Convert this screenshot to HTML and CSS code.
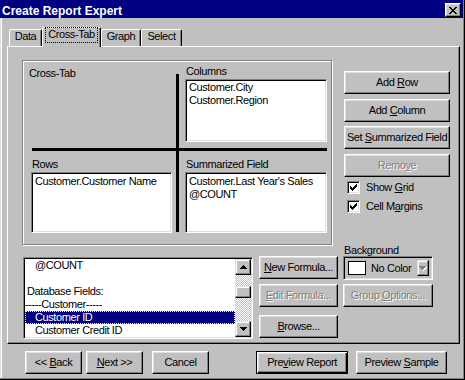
FILE: index.html
```html
<!DOCTYPE html>
<html lang="en">
<head>
<meta charset="utf-8">
<title>Create Report Expert</title>
<link rel="stylesheet" href="styles.css">
</head>
<body>
<div class="window">
  <div class="titlebar">
    <span class="title">Create Report Expert</span>
    <button class="close-btn" aria-label="Close">
      <svg width="8" height="7" viewBox="0 0 8 7" shape-rendering="crispEdges"><path fill="#000" d="M0 0h2v1H0z M6 0h2v1H6z M1 1h2v1H1z M5 1h2v1H5z M2 2h4v1H2z M3 3h2v1H3z M2 4h4v1H2z M1 5h2v1H1z M5 5h2v1H5z M0 6h2v1H0z M6 6h2v1H6z"/></svg>
    </button>
  </div>
  <div class="client">
    <div class="tabs">
      <div class="tab tab-data">Data</div>
      <div class="tab tab-active tab-xt"><span class="focus">Cross-Tab</span></div>
      <div class="tab tab-graph">Graph</div>
      <div class="tab tab-select">Select</div>
    </div>
    <div class="panel">
      <div class="top-row">
        <div class="groupbox">
          <div class="xt-grid">
            <div class="xt-label">Cross-Tab</div>
            <div class="cell">
              <div class="lbl">Columns</div>
              <div class="field field-cols">
                <div>Customer.City</div>
                <div>Customer.Region</div>
              </div>
            </div>
            <div class="cell cell-rows">
              <div class="lbl">Rows</div>
              <div class="field field-rows">
                <div>Customer.Customer Name</div>
              </div>
            </div>
            <div class="cell">
              <div class="lbl">Summarized Field</div>
              <div class="field field-sum">
                <div>Customer.Last Year's Sales</div>
                <div>@COUNT</div>
              </div>
            </div>
          </div>
          <div class="vline"></div>
          <div class="hline"></div>
        </div>
        <div class="side">
          <button class="btn side-btn">Add <u>R</u>ow</button>
          <button class="btn side-btn sb2">Add <u>C</u>olumn</button>
          <button class="btn side-btn sb3">Set <u>S</u>ummarized Field</button>
          <button class="btn side-btn sb4" disabled>Remo<u>v</u>e</button>
          <div class="check ck1"><span class="box"><svg width="7" height="7" viewBox="0 0 7 7" shape-rendering="crispEdges"><path fill="#000" d="M0 2h1v3H0z M1 3h1v3H1z M2 4h1v3H2z M3 3h1v3H3z M4 2h1v3H4z M5 1h1v3H5z M6 0h1v3H6z"/></svg></span><span class="ck-text">Show <u>G</u>rid</span></div>
          <div class="check ck2"><span class="box"><svg width="7" height="7" viewBox="0 0 7 7" shape-rendering="crispEdges"><path fill="#000" d="M0 2h1v3H0z M1 3h1v3H1z M2 4h1v3H2z M3 3h1v3H3z M4 2h1v3H4z M5 1h1v3H5z M6 0h1v3H6z"/></svg></span><span class="ck-text">Cell M<u>a</u>rgins</span></div>
        </div>
      </div>
      <div class="bottom-row">
        <div class="dblist">
          <div class="items">
            <div class="item ind">@COUNT</div>
            <div class="item">&nbsp;</div>
            <div class="item ind-s">Database Fields:</div>
            <div class="item">-----Customer-----</div>
            <div class="item ind sel">Customer ID</div>
            <div class="item ind">Customer Credit ID</div>
          </div>
          <div class="scrollbar">
            <div class="sb-btn"><svg width="7" height="4" viewBox="0 0 7 4" shape-rendering="crispEdges"><path fill="#000" d="M3 0h1v1H3z M2 1h3v1H2z M1 2h5v1H1z M0 3h7v1H0z"/></svg></div>
            <div class="sb-thumb"></div>
            <div class="sb-btn sb-down"><svg width="7" height="4" viewBox="0 0 7 4" shape-rendering="crispEdges"><path fill="#000" d="M0 0h7v1H0z M1 1h5v1H1z M2 2h3v1H2z M3 3h1v1H3z"/></svg></div>
          </div>
        </div>
        <div class="mid">
          <button class="btn mid-btn"><u>N</u>ew Formula...</button>
          <button class="btn mid-btn mb2" disabled><u>E</u>dit Formula...</button>
          <button class="btn mid-btn mb3"><u>B</u>rowse...</button>
        </div>
        <div class="bg">
          <div class="bg-label">Background</div>
          <div class="combo">
            <span class="swatch"></span>
            <span class="combo-text">No Color</span>
            <span class="combo-btn"><svg width="8" height="5" viewBox="0 0 8 5" shape-rendering="crispEdges"><path fill="#fff" d="M1 1h7v1H1z M2 2h5v1H2z M3 3h3v1H3z M4 4h1v1H4z"/><path fill="#808080" d="M0 0h7v1H0z M1 1h5v1H1z M2 2h3v1H2z M3 3h1v1H3z"/></svg></span>
          </div>
          <button class="btn grp-btn" disabled>Group <u>O</u>ptions...</button>
        </div>
      </div>
    </div>
    <div class="footer">
      <button class="btn f-btn">&lt;&lt; <u>B</u>ack</button>
      <button class="btn f-btn f-next"><u>N</u>ext &gt;&gt;</button>
      <button class="btn f-btn f-cancel">Cancel</button>
      <button class="btn btn-default f-prev">Pre<u>v</u>iew Report</button>
      <button class="btn f-sample">Preview <u>S</u>ample</button>
    </div>
  </div>
</div>
</body>
</html>
```
FILE: styles.css
```css
html, body {
  margin: 0;
  padding: 0;
}
body {
  background: #c0c0c0;
  font-family: "Liberation Sans", Arial, sans-serif;
  font-size: 11px;
  line-height: 13px;
  letter-spacing: -0.4px;
  color: #000;
  overflow: hidden;
}
button {
  font: inherit;
  letter-spacing: inherit;
  color: inherit;
  margin: 0;
  padding: 0;
}
u { text-underline-offset: 1px; }

.window {
  width: 465px;
  height: 380px;
  box-sizing: border-box;
  border-right: 1px solid #000;
  border-bottom: 1px solid #000;
  padding: 0 1px 1px 0;
  background: #c0c0c0;
  box-shadow: inset -1px -1px #808080, inset 1px 0 #dfdfdf, inset 2px 0 #fff;
}

/* title bar */
.titlebar {
  height: 18px;
  background: #000080;
  display: flex;
  align-items: flex-start;
}
.title {
  color: #fff;
  font-weight: bold;
  font-size: 12px;
  letter-spacing: 0;
  line-height: 14px;
  margin: 4px 0 0 2px;
}
.close-btn {
  width: 16px;
  height: 14px;
  margin: 3px 2px 0 auto;
  box-sizing: border-box;
  background: #c0c0c0;
  border: 1px solid;
  border-color: #fff #000 #000 #fff;
  box-shadow: inset -1px -1px #808080, inset 1px 1px #dfdfdf;
  display: flex;
  align-items: center;
  justify-content: center;
}
.close-btn svg { display: block; margin-left: -1px; }

/* client */
.client {
  padding-left: 7px;
}
.tabs {
  display: flex;
  align-items: flex-end;
  height: 19px;
  margin-top: 9px;
  padding-left: 2px;
  position: relative;
  z-index: 1;
}
.tab {
  box-sizing: border-box;
  height: 17px;
  border: 1px solid;
  border-bottom: none;
  border-color: #fff #000 transparent #fff;
  border-radius: 2px 2px 0 0;
  box-shadow: inset -1px 0 #808080;
  background: #c0c0c0;
  text-align: center;
  line-height: 13px;
}
.tab-data { width: 33px; }
.tab-xt { width: 59px; }
.tab-graph { width: 40px; }
.tab-select { width: 41px; }
.tab-active {
  height: 20px;
  margin-bottom: -1px;
}
.focus {
  display: inline-block;
  padding: 0 2px 1px;
  outline: 1px dotted #000;
  outline-offset: 0;
}

.panel {
  width: 453px;
  height: 298px;
  box-sizing: border-box;
  border: 1px solid;
  border-color: #fff #000 #000 #fff;
  box-shadow: inset -1px -1px #808080;
}

.top-row {
  display: flex;
  align-items: flex-start;
  margin: 13px 0 0 14px;
}
.groupbox {
  position: relative;
  width: 310px;
  height: 185px;
  box-sizing: border-box;
  border: 1px solid #808080;
  box-shadow: 1px 1px 0 #fff, inset 1px 1px 0 #fff;
  padding: 4px 0 0 6px;
}
.xt-grid {
  display: grid;
  grid-template-columns: 156px 142px;
  row-gap: 16px;
}
.xt-label { padding-top: 2px; }
.cell-rows { padding-left: 2px; }
.lbl { padding-left: 1px; line-height: 13px; }
.field {
  box-sizing: border-box;
  background: #fff;
  border: 1px solid;
  border-color: #808080 #fff #fff #808080;
  box-shadow: inset 1px 1px #000, inset -1px -1px #dfdfdf;
  padding: 1px 2px 0 3px;
  white-space: nowrap;
  overflow: hidden;
}
.field-cols { height: 63px; margin-top: 1px; }
.field-rows { width: 141px; height: 61px; margin-top: 1px; padding-top: 2px; }
.field-sum { height: 61px; margin-top: 1px; padding-top: 2px; }

.vline {
  position: absolute;
  left: 153px;
  top: 13px;
  width: 3px;
  height: 158px;
  background: #000;
}
.hline {
  position: absolute;
  left: 9px;
  top: 87px;
  width: 295px;
  height: 3px;
  background: #000;
}

/* generic button */
.btn {
  display: block;
  box-sizing: border-box;
  height: 23px;
  background: #c0c0c0;
  border: 1px solid;
  border-color: #fff #000 #000 #fff;
  box-shadow: inset -1px -1px #808080, inset 1px 1px #dfdfdf;
  text-align: center;
  line-height: 20px;
  padding-bottom: 1px;
  white-space: nowrap;
}
.btn:disabled {
  color: #808080;
  text-shadow: 1px 1px 0 #fff;
}
.btn-default {
  border-color: #000;
  box-shadow: inset 1px 1px #fff, inset -1px -1px #000, inset -2px -2px #808080, inset 2px 2px #dfdfdf;
}

.side {
  display: flex;
  flex-direction: column;
  width: 106px;
  margin: 11px 0 0 12px;
}
.side-btn { width: 106px; }
.sb2 { margin-top: 5px; }
.sb3 { margin-top: 4px; }
.sb4 { margin-top: 5px; }
.check {
  display: flex;
  align-items: center;
  height: 13px;
  padding-left: 3px;
}
.ck1 { margin-top: 4px; }
.ck2 { margin-top: 6px; }
.box {
  box-sizing: border-box;
  width: 13px;
  height: 13px;
  background: #fff;
  border: 1px solid;
  border-color: #808080 #fff #fff #808080;
  box-shadow: inset 1px 1px #000, inset -1px -1px #dfdfdf;
  display: flex;
  align-items: center;
  justify-content: center;
}
.box svg { display: block; }
.ck-text { margin-left: 6px; }

/* bottom row */
.bottom-row {
  display: flex;
  align-items: flex-start;
  margin-left: 15px;
}
.dblist {
  display: flex;
  width: 230px;
  height: 82px;
  margin-top: 12px;
  box-sizing: border-box;
  background: #fff;
  border: 1px solid;
  border-color: #808080 #fff #fff #808080;
  box-shadow: inset 1px 1px #000, inset -1px -1px #dfdfdf;
  padding: 1px;
}
.items {
  flex: 1;
  overflow: hidden;
}
.item {
  height: 13px;
  line-height: 13px;
  white-space: nowrap;
}
.ind { padding-left: 10px; }
.ind-s { padding-left: 2px; }
.sel {
  background: #000080;
  color: #fff;
  outline: 1px dotted #ffff80;
  outline-offset: -1px;
}
.scrollbar {
  width: 16px;
  display: flex;
  flex-direction: column;
  background: repeating-conic-gradient(#c0c0c0 0 25%, #fff 0 50%) 0 0 / 2px 2px;
}
.sb-btn {
  box-sizing: border-box;
  width: 16px;
  height: 16px;
  background: #c0c0c0;
  border: 1px solid;
  border-color: #dfdfdf #000 #000 #dfdfdf;
  box-shadow: inset -1px -1px #808080, inset 1px 1px #fff;
  display: flex;
  align-items: center;
  justify-content: center;
}
.sb-btn svg { display: block; }
.sb-thumb {
  box-sizing: border-box;
  height: 12px;
  margin-top: 11px;
  background: #c0c0c0;
  border: 1px solid;
  border-color: #dfdfdf #000 #000 #dfdfdf;
  box-shadow: inset -1px -1px #808080, inset 1px 1px #fff;
}
.sb-down { margin-top: auto; }

.mid {
  display: flex;
  flex-direction: column;
  margin: 11px 0 0 6px;
}
.mid-btn { width: 79px; }
.mb2 { margin-top: 5px; }
.mb3 { margin-top: 8px; }

.bg {
  display: flex;
  flex-direction: column;
  margin-left: 5px;
  width: 90px;
}
.bg-label {
  line-height: 11px;
  padding-left: 1px;
}
.combo {
  box-sizing: border-box;
  width: 90px;
  height: 24px;
  border: 1px solid;
  border-color: #808080 #fff #fff #808080;
  box-shadow: inset 1px 1px #000, inset -1px -1px #dfdfdf;
  display: flex;
  align-items: center;
  padding: 0 0 0 4px;
  background: #c0c0c0;
}
.swatch {
  box-sizing: border-box;
  width: 18px;
  height: 14px;
  background: #fff;
  border: 1px solid #000;
}
.combo-text { margin-left: 5px; }
.combo-btn {
  box-sizing: border-box;
  width: 12px;
  height: 16px;
  margin: 0 3px 0 auto;
  border: 1px solid;
  border-color: #dfdfdf #000 #000 #dfdfdf;
  box-shadow: inset -1px -1px #808080, inset 1px 1px #fff;
  display: flex;
  align-items: center;
  justify-content: center;
}
.combo-btn svg { display: block; }
.grp-btn {
  width: 90px;
  margin-top: 4px;
}

/* footer */
.footer {
  display: flex;
  margin: 7px 0 0 18px;
}
.f-btn { width: 57px; }
.f-next { margin-left: 4px; }
.f-cancel { margin-left: 9px; }
.f-prev { width: 92px; margin-left: 47px; }
.f-sample { width: 91px; margin-left: 8px; }
```
